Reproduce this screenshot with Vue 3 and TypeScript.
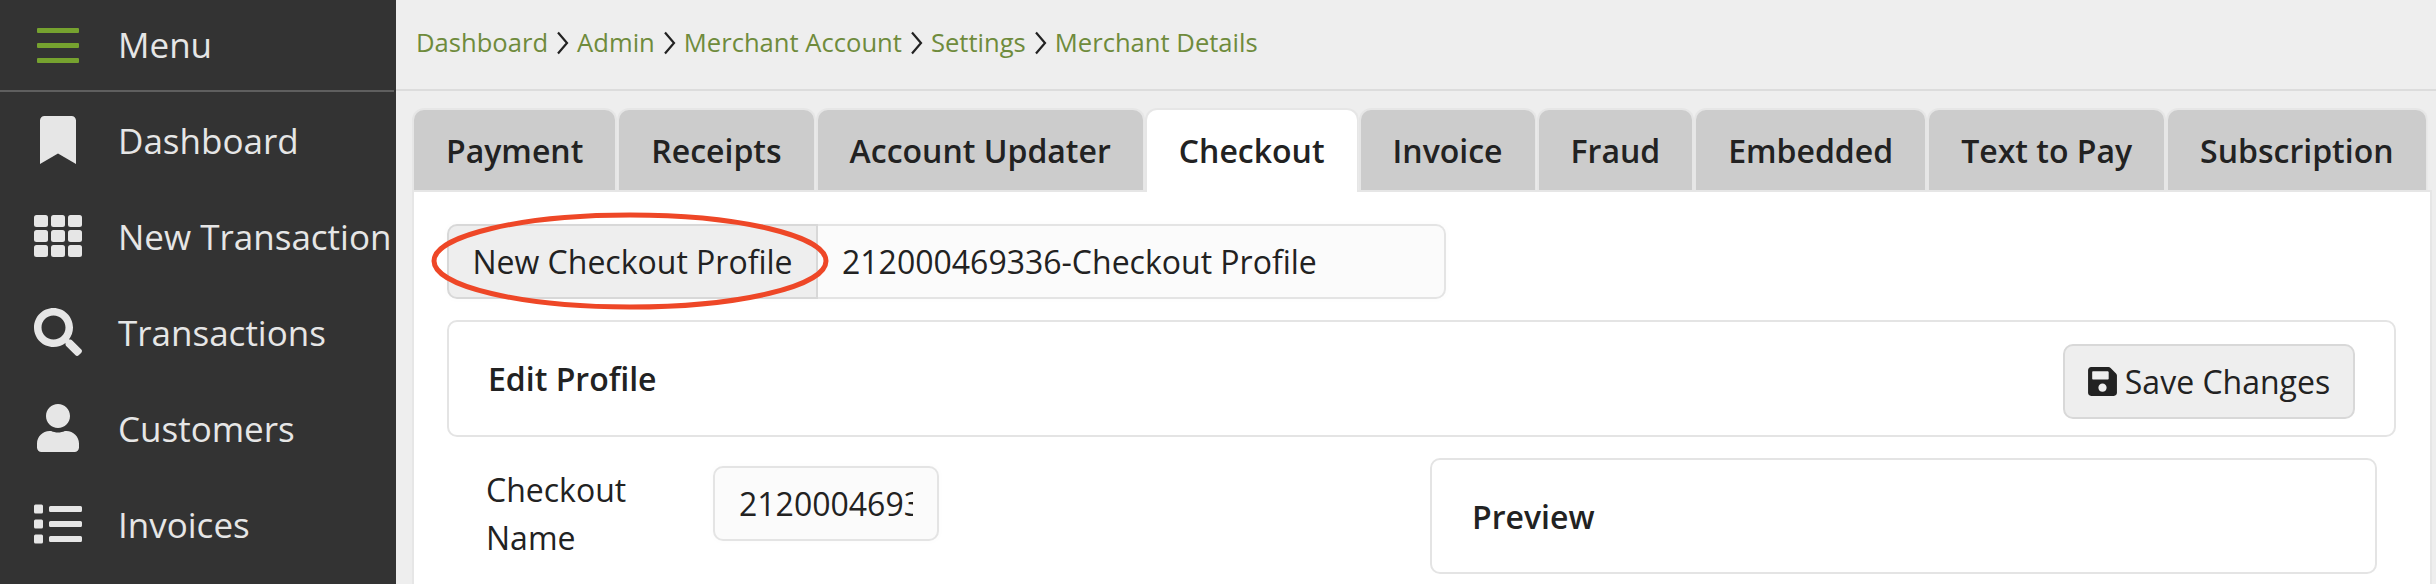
<script setup lang="ts">
const crumbs: string[] = ['Dashboard', 'Admin', 'Merchant Account', 'Settings', 'Merchant Details']
const tabs: string[] = ['Payment', 'Receipts', 'Account Updater', 'Checkout', 'Invoice', 'Fraud', 'Embedded', 'Text to Pay', 'Subscription']
</script>

<template>
  <div class="app">
    <aside class="sidebar">
      <div class="menu-head">
        <span class="icon-slot">
          <svg width="42" height="35" viewBox="0 0 42 35"><rect y="0" width="42" height="5" rx="1" fill="#76a22f"/><rect y="15" width="42" height="5" rx="1" fill="#76a22f"/><rect y="30" width="42" height="5" rx="1" fill="#76a22f"/></svg>
        </span>
        <span>Menu</span>
      </div>
      <nav class="nav">
        <a class="nav-item">
          <span class="icon-slot"><svg width="36" height="48" viewBox="0 0 384 512"><path fill="#e6e6e6" d="M0 512V48C0 21.49 21.49 0 48 0h288c26.51 0 48 21.49 48 48v464L192 400 0 512z"/></svg></span>
          <span>Dashboard</span>
        </a>
        <a class="nav-item">
          <span class="icon-slot"><svg width="48" height="42" viewBox="0 0 48 42" fill="#e6e6e6"><rect x="0" y="0" width="14" height="12" rx="2.5"/><rect x="17" y="0" width="14" height="12" rx="2.5"/><rect x="34" y="0" width="14" height="12" rx="2.5"/><rect x="0" y="15" width="14" height="12" rx="2.5"/><rect x="17" y="15" width="14" height="12" rx="2.5"/><rect x="34" y="15" width="14" height="12" rx="2.5"/><rect x="0" y="30" width="14" height="12" rx="2.5"/><rect x="17" y="30" width="14" height="12" rx="2.5"/><rect x="34" y="30" width="14" height="12" rx="2.5"/></svg></span>
          <span>New Transaction</span>
        </a>
        <a class="nav-item">
          <span class="icon-slot"><svg width="48" height="48" viewBox="0 0 512 512"><path fill="#e6e6e6" d="M505 442.7L405.3 343c-4.5-4.5-10.6-7-17-7H372c27.6-35.3 44-79.7 44-128C416 93.1 322.9 0 208 0S0 93.1 0 208s93.1 208 208 208c48.3 0 92.7-16.4 128-44v16.3c0 6.4 2.5 12.5 7 17l99.7 99.7c9.4 9.4 24.6 9.4 33.9 0l28.3-28.3c9.4-9.4 9.4-24.6.1-34zM208 336c-70.7 0-128-57.2-128-128 0-70.7 57.2-128 128-128 70.7 0 128 57.2 128 128 0 70.7-57.2 128-128 128z"/></svg></span>
          <span>Transactions</span>
        </a>
        <a class="nav-item">
          <span class="icon-slot"><svg width="42" height="48" viewBox="0 0 448 512"><path fill="#e6e6e6" d="M224 256c70.7 0 128-57.3 128-128S294.7 0 224 0 96 57.3 96 128s57.3 128 128 128zm89.6 32h-16.7c-22.2 10.2-46.9 16-72.9 16s-50.6-5.8-72.9-16h-16.7C60.2 288 0 348.2 0 422.4V464c0 26.5 21.5 48 48 48h352c26.5 0 48-21.5 48-48v-41.6c0-74.2-60.2-134.4-134.4-134.4z"/></svg></span>
          <span>Customers</span>
        </a>
        <a class="nav-item">
          <span class="icon-slot"><svg width="48" height="48" viewBox="0 0 512 512"><path fill="#e6e6e6" d="M80 368H16a16 16 0 0 0-16 16v64a16 16 0 0 0 16 16h64a16 16 0 0 0 16-16v-64a16 16 0 0 0-16-16zm0-320H16A16 16 0 0 0 0 64v64a16 16 0 0 0 16 16h64a16 16 0 0 0 16-16V64a16 16 0 0 0-16-16zm0 160H16a16 16 0 0 0-16 16v64a16 16 0 0 0 16 16h64a16 16 0 0 0 16-16v-64a16 16 0 0 0-16-16zm416 176H176a16 16 0 0 0-16 16v32a16 16 0 0 0 16 16h320a16 16 0 0 0 16-16v-32a16 16 0 0 0-16-16zm0-320H176a16 16 0 0 0-16 16v32a16 16 0 0 0 16 16h320a16 16 0 0 0 16-16V80a16 16 0 0 0-16-16zm0 160H176a16 16 0 0 0-16 16v32a16 16 0 0 0 16 16h320a16 16 0 0 0 16-16v-32a16 16 0 0 0-16-16z"/></svg></span>
          <span>Invoices</span>
        </a>
      </nav>
    </aside>

    <main class="main">
      <header class="crumbs">
        <template v-for="(c, i) in crumbs" :key="c">
          <svg v-if="i > 0" class="chev" width="13" height="24" viewBox="0 0 13 24"><path d="M2 1.5 L11 12 L2 22.5" fill="none" stroke="#222" stroke-width="2.2"/></svg>
          <a class="crumb">{{ c }}</a>
        </template>
      </header>

      <div class="tabs">
        <div v-for="t in tabs" :key="t" class="tab" :class="{ active: t === 'Checkout' }">{{ t }}</div>
      </div>

      <section class="panel">
        <div class="group">
          <button class="group-btn">New Checkout Profile</button>
          <input class="group-input" readonly value="212000469336-Checkout Profile" />
          <svg class="ring" width="398" height="98" viewBox="0 0 398 98"><ellipse cx="199" cy="49" rx="196" ry="46" fill="none" stroke="#ee4727" stroke-width="5"/></svg>
        </div>

        <div class="edit-card">
          <strong>Edit Profile</strong>
          <button class="save">
            <svg width="29" height="33" viewBox="0 0 448 512"><path fill="#222" d="M433.941 129.941l-83.882-83.882A48 48 0 0 0 316.118 32H48C21.49 32 0 53.49 0 80v352c0 26.51 21.49 48 48 48h352c26.51 0 48-21.49 48-48V163.882a48 48 0 0 0-14.059-33.941zM224 416c-35.346 0-64-28.654-64-64 0-35.346 28.654-64 64-64s64 28.654 64 64c0 35.346-28.654 64-64 64zm96-304.52V212c0 6.627-5.373 12-12 12H76c-6.627 0-12-5.373-12-12V108c0-6.627 5.373-12 12-12h228.52c3.183 0 6.235 1.264 8.485 3.515l3.48 3.48A11.996 11.996 0 0 1 320 111.48z"/></svg>
            <span>Save Changes</span>
          </button>
        </div>

        <div class="form-row">
          <div class="form-left">
            <label class="form-label">Checkout Name</label>
            <input class="name-input" readonly value="212000469336-Checkout Profile" />
          </div>
          <div class="preview"><strong>Preview</strong></div>
        </div>
      </section>
    </main>
  </div>
</template>

<style>
html, body { margin: 0; background: #eee; }
</style>

<style scoped>
.app {
  display: flex;
  width: 2436px;
  height: 584px;
  overflow: hidden;
  font-family: "Open Sans", "Noto Sans", sans-serif;
  font-size: 32px;
  color: #222;
  background: #eee;
}
.sidebar {
  flex: 0 0 396px;
  background: #333;
  color: #e6e6e6;
  font-size: 35px;
}
.menu-head {
  display: flex;
  align-items: center;
  height: 90px;
  width: 394px;
  box-sizing: content-box;
  border-bottom: 2px solid #5f5f5f;
}
.menu-head span:last-child { margin-bottom: 2px; }
.icon-slot {
  flex: 0 0 118px;
  display: flex;
  justify-content: center;
  padding-right: 2px;
  box-sizing: border-box;
}
.icon-slot svg { display: block; }
.nav-item {
  display: flex;
  align-items: center;
  height: 96px;
  white-space: nowrap;
}
.main {
  flex: 1;
  min-width: 0;
  display: flex;
  flex-direction: column;
}
.crumbs {
  flex: none;
  display: flex;
  align-items: center;
  gap: 8px;
  padding: 0 0 4px 20px;
  box-sizing: border-box;
  border-bottom: 2px solid #dcdcdc;
  height: 91px;
  font-size: 25.6px;
}
.chev { flex: none; }
.crumb { color: #6f8b3c; }
.tabs {
  flex: none;
  display: flex;
  gap: 4px;
  margin: 19px 0 0 18px;
  position: relative;
  z-index: 1;
}
.tab {
  height: 80px;
  padding: 0 32px;
  display: flex;
  align-items: center;
  background: #ccc;
  border-radius: 10px 10px 0 0;
  box-shadow: 0 0 0 2px #e6e6e6;
  clip-path: inset(-2px -2px 0 -2px);
  font-weight: 600;
  white-space: nowrap;
}
.tab.active {
  background: #fff;
  height: 82px;
  padding-bottom: 2px;
  box-sizing: border-box;
  margin-bottom: -2px;
}
.panel {
  flex: 1;
  margin: 0 4px 0 16px;
  padding: 32px 34px 0 33px;
  background: #fff;
  border: 2px solid #e6e6e6;
  border-bottom: 0;
}
.group {
  position: relative;
  display: flex;
  width: 999px;
  height: 75px;
  border-radius: 10px;
  box-shadow: 0 0 5px 2px rgba(0, 0, 0, 0.012);
}
.group-btn {
  flex: 0 0 371px;
  font: inherit;
  color: #222;
  background: #eee;
  border: 2px solid #d8d8d8;
  border-radius: 10px 0 0 10px;
  padding: 0;
}
.group-input {
  flex: 1;
  min-width: 0;
  font: inherit;
  color: #222;
  background: #fbfbfb;
  border: 2px solid #e4e4e4;
  border-left: 0;
  border-radius: 0 10px 10px 0;
  padding: 0 24px;
  outline: none;
}
.ring {
  position: absolute;
  left: -16px;
  top: -12px;
  pointer-events: none;
}
.edit-card {
  margin-top: 21px;
  height: 117px;
  box-sizing: border-box;
  border: 2px solid #e4e4e4;
  border-radius: 10px;
  display: flex;
  align-items: center;
  justify-content: space-between;
  padding: 0 39px 0 39px;
}
.save {
  width: 292px;
  height: 75px;
  margin-top: 6px;
  font: inherit;
  color: #222;
  background: #eee;
  border: 2px solid #d8d8d8;
  border-radius: 10px;
  display: flex;
  align-items: center;
  justify-content: center;
  gap: 8px;
  padding: 0;
}
.form-row {
  margin-top: 21px;
  display: flex;
  justify-content: space-between;
  padding-right: 19px;
}
.form-left {
  display: flex;
  align-items: flex-start;
  padding: 8px 0 0 39px;
}
.form-label {
  width: 227px;
  line-height: 48px;
}
.name-input {
  width: 226px;
  height: 75px;
  box-sizing: border-box;
  font: inherit;
  color: #222;
  background: #fbfbfb;
  border: 2px solid #e4e4e4;
  border-radius: 10px;
  padding: 0 24px;
  outline: none;
  box-shadow: 0 0 5px 2px rgba(0, 0, 0, 0.012);
}
.preview {
  width: 947px;
  height: 116px;
  box-sizing: border-box;
  border: 2px solid #e4e4e4;
  border-radius: 10px;
  display: flex;
  align-items: center;
  padding-left: 40px;
}
strong { font-weight: 600; }
</style>
